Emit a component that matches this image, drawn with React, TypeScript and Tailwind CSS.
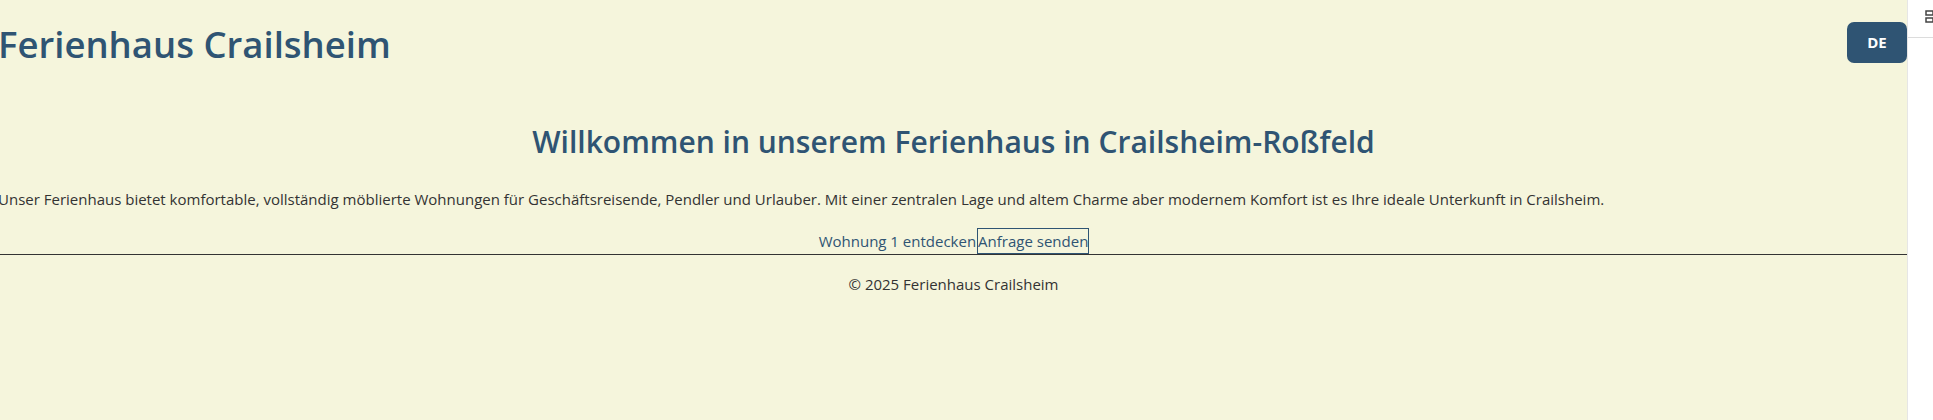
export default function App() {
  return (
    <div className="flex h-[420px] w-full overflow-hidden font-['Open_Sans',sans-serif]">
      {/* page */}
      <div className="flex min-w-0 flex-1 flex-col bg-[#f5f5dc] text-[#333]">
        <header className="flex items-start justify-between pt-[22px]">
          <h1 className="ml-[-2px] text-[36.5px] font-semibold leading-[44px] text-[#2f5473]">
            Ferienhaus Crailsheim
          </h1>
          <button className="h-[41px] w-[60px] rounded-[7px] bg-[#2f5473] text-[15px] font-bold text-white">
            DE
          </button>
        </header>

        <main className="mt-[57px] flex flex-col">
          <h2 className="text-center text-[30px] font-semibold leading-[38px] text-[#2f5473]">
            Willkommen in unserem Ferienhaus in Crailsheim-Roßfeld
          </h2>
          <p className="ml-[-2px] mt-[26px] whitespace-nowrap text-[15px] leading-[24px] text-[#333]">
            Unser Ferienhaus bietet komfortable, vollständig möblierte Wohnungen für Geschäftsreisende, Pendler und Urlauber. Mit einer zentralen Lage und altem Charme aber modernem Komfort ist es Ihre ideale Unterkunft in Crailsheim.
          </p>
          <div className="mt-[17px] flex justify-center text-[15px] leading-[24px] text-[#2f5473]">
            <a href="#" className="border border-transparent">Wohnung 1 entdecken</a>
            <a href="#" className="border border-[#2f5473]">Anfrage senden</a>
          </div>
        </main>

        <footer className="border-t border-[#333] pt-[18px] text-center text-[15px] leading-[22px] text-[#333]">
          © 2025 Ferienhaus Crailsheim
        </footer>
      </div>

      {/* side strip */}
      <div className="flex w-[26px] shrink-0 flex-col border-l border-[#e6e6e6] bg-white">
        <div className="flex h-[38px] justify-end border-b border-[#dcdcdc] pt-[10px]">
          <svg width="8" height="14" viewBox="0 0 8 14" fill="none" stroke="#444" strokeWidth="1.5">
            <rect x="1" y="1" width="7" height="4" />
            <rect x="1" y="8" width="7" height="4" />
          </svg>
        </div>
      </div>
    </div>
  )
}
